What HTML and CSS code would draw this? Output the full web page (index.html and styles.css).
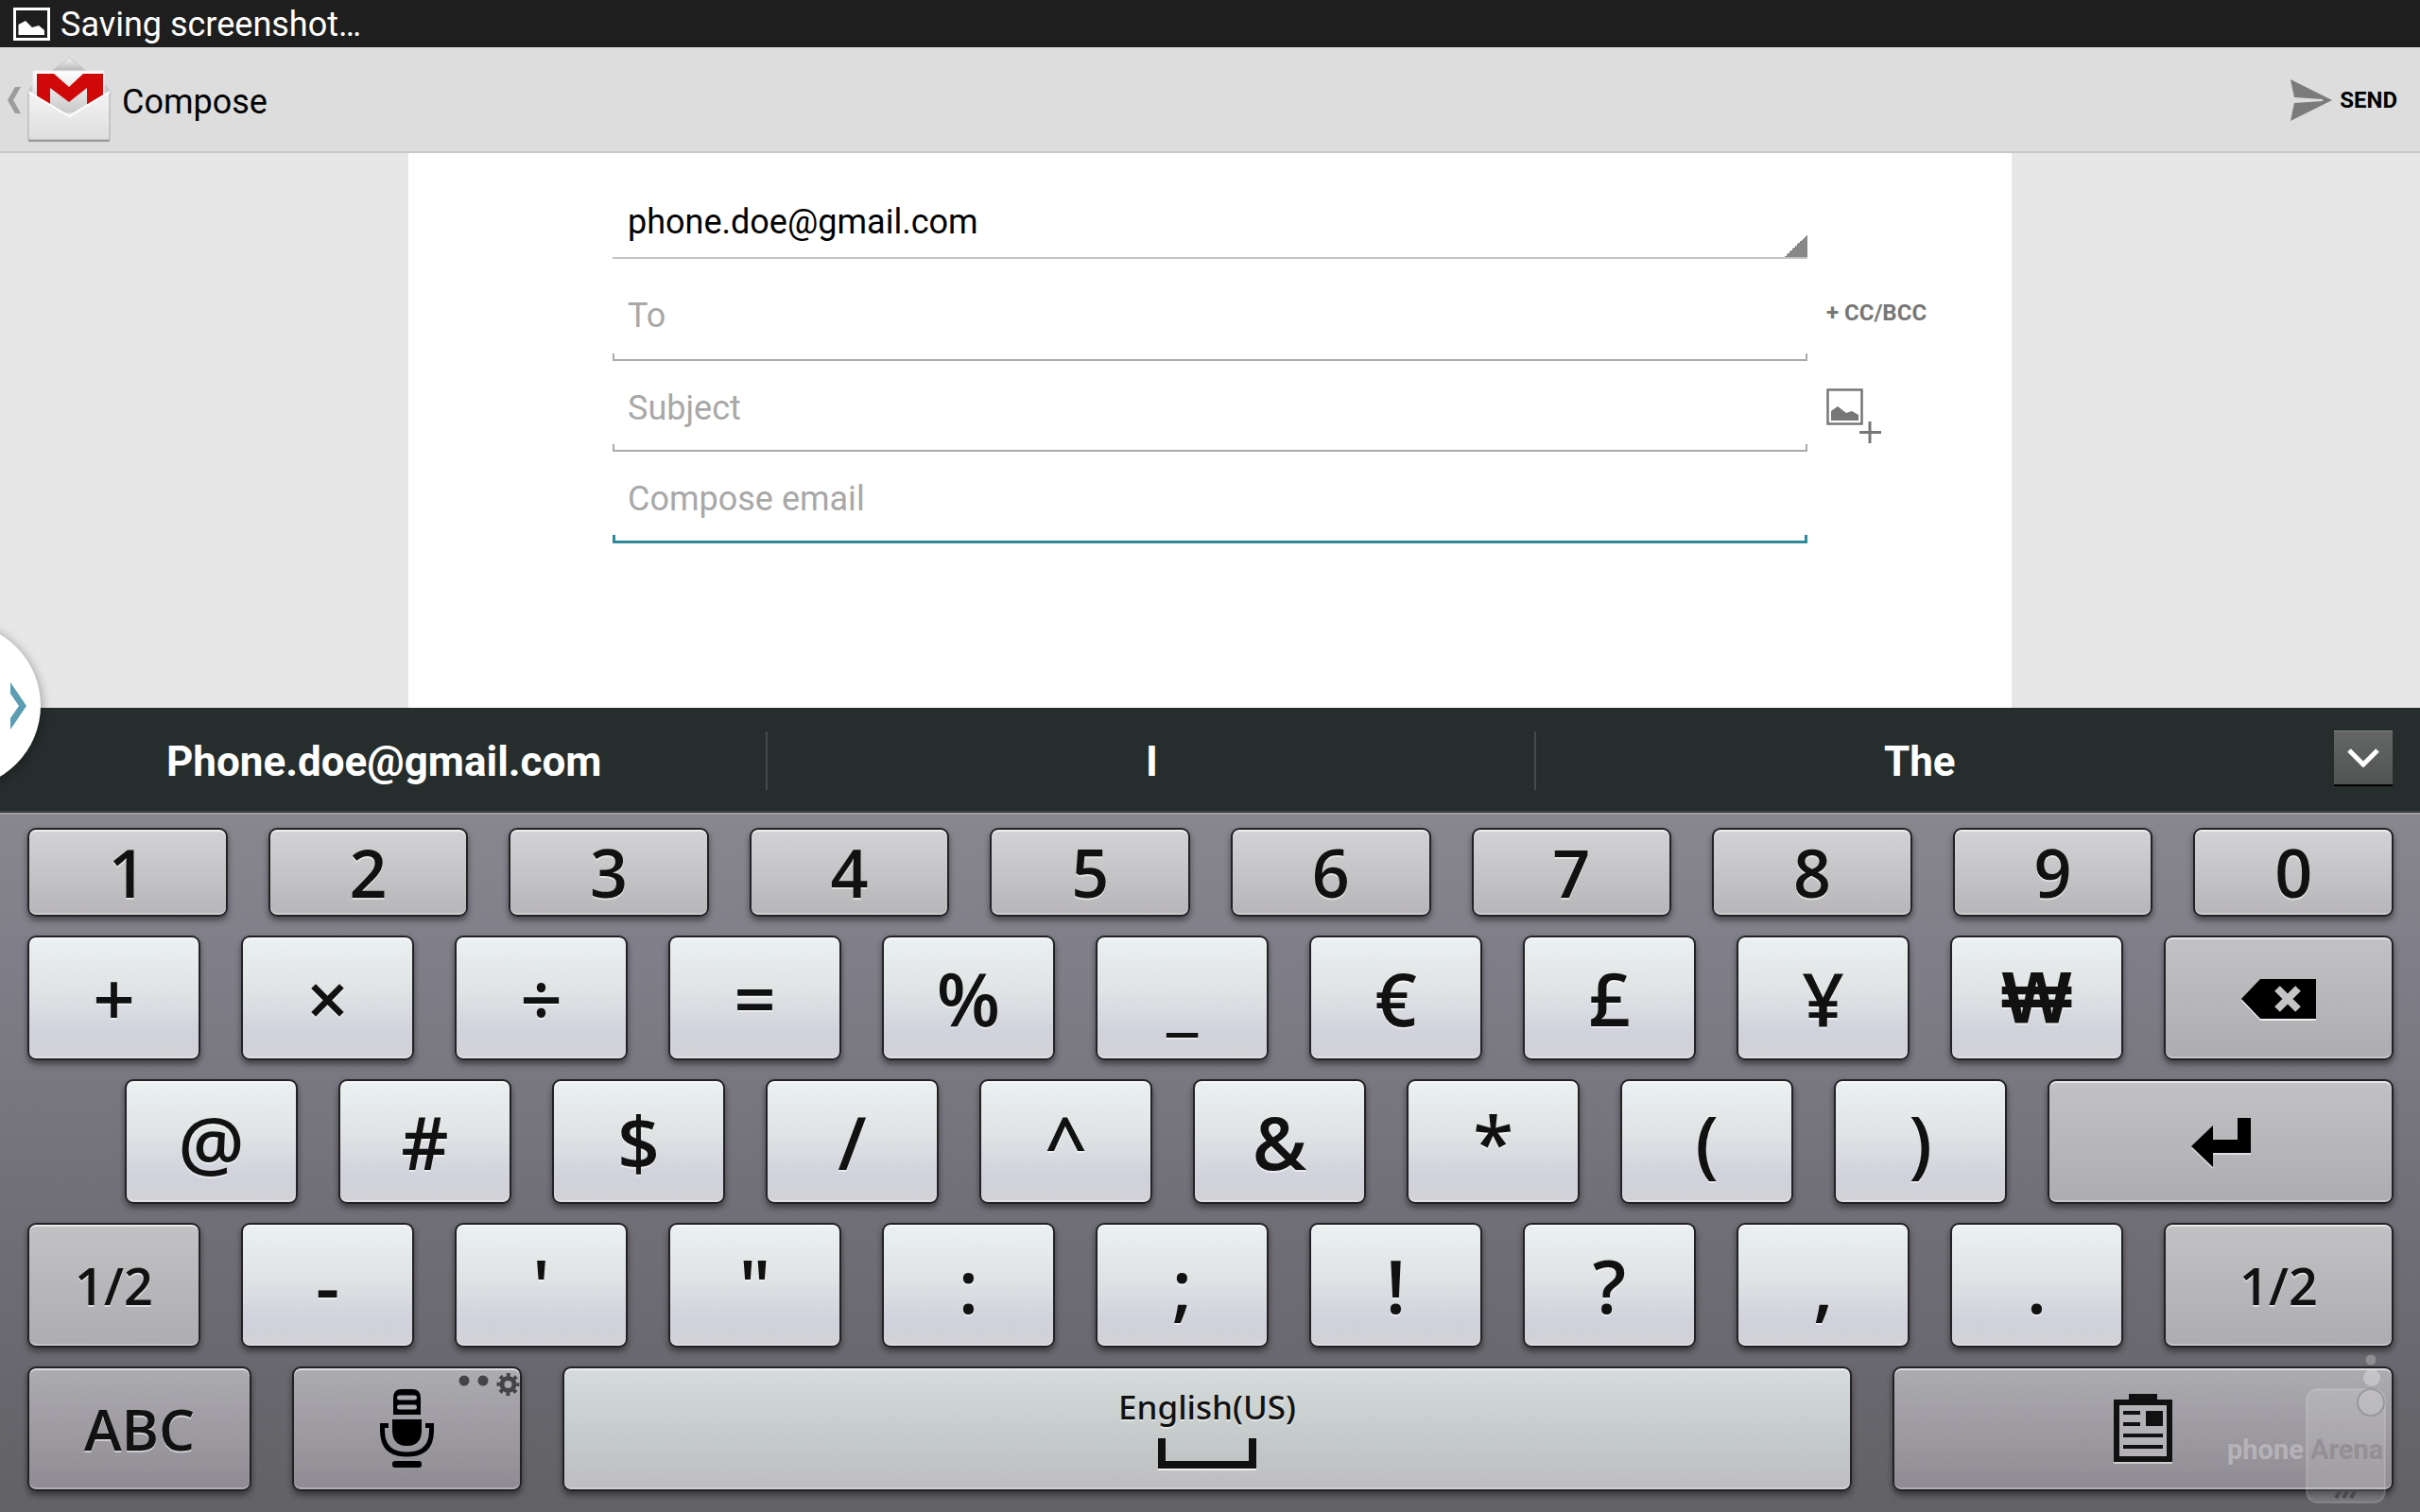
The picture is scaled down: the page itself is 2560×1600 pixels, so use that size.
FILE: index.html
```html
<!DOCTYPE html>
<html lang="en">
<head>
  <meta charset="UTF-8" />
  <meta name="viewport" content="width=device-width, initial-scale=1.0" />
  <title>Compose</title>
  <link rel="stylesheet" href="styles.css">
</head>
<body>
  <div class="status-bar">
    <svg width="39" height="35" viewBox="0 0 39 35">
      <rect x="1.5" y="1.5" width="36" height="32" fill="none" stroke="#fff" stroke-width="3"/>
      <path d="M5.5 29V18L13 14L20 21L27 19L33 24V29Z" fill="#fff"/>
    </svg>
    <span>Saving screenshot…</span>
  </div>

  <header class="action-bar">
    <a class="up" href="#" aria-label="Navigate up">
      <svg width="14" height="28" viewBox="0 0 14 28"><path d="M8 0H14L6 14L14 28H8L0 14Z" fill="#9c9c9c"/></svg>
      <svg width="90" height="92" viewBox="0 0 90 92">
        <defs>
          <linearGradient id="flap" x1="0" y1="0" x2="0" y2="1"><stop offset="0" stop-color="#f4f4f4"/><stop offset=".35" stop-color="#bbb"/><stop offset="1" stop-color="#ccc"/></linearGradient>
          <linearGradient id="card" x1="0" y1="0" x2="0" y2="1"><stop offset="0" stop-color="#fff"/><stop offset="1" stop-color="#c8c8c8"/></linearGradient>
          <linearGradient id="front" x1="0" y1="0" x2="0" y2="1"><stop offset="0" stop-color="#f4f4f4"/><stop offset="1" stop-color="#dedede"/></linearGradient>
        </defs>
        <path d="M45 1L86 33Q88 35 88 38H2Q2 35 4 33Z" fill="url(#flap)" stroke="#c6c6c6"/>
        <path d="M7 15H82V60H7Z" fill="url(#card)" stroke="#eee"/>
        <path d="M11 18H29L45 32L60 18H81V50H64V33L45 48L25 33V50H11Z" fill="#d00808"/>
        <path d="M2 37L45 63L88 37V88H2Z" fill="url(#front)" stroke="#aaa"/>
        <path d="M2 37L45 63L88 37" fill="none" stroke="#fff" stroke-width="2"/>
        <path d="M2 89H88" stroke="#999" stroke-width="2"/>
      </svg>
    </a>
    <h1>Compose</h1>
    <button class="send" type="button">
      <svg width="44" height="44" viewBox="0 0 44 44"><path d="M0 0L44 22L0 44L4 25L34 23V21L4 19Z" fill="#7b7b7b"/></svg>
      SEND
    </button>
  </header>

  <main class="compose">
    <form class="sheet">
      <select class="account" aria-label="From"><option>phone.doe@gmail.com</option></select>
      <input class="field field-to" type="text" placeholder="To" aria-label="To">
      <button class="side cc" type="button">+ CC/BCC</button>
      <input class="field" type="text" placeholder="Subject" aria-label="Subject">
      <button class="side" type="button" aria-label="Attach picture">
        <svg width="58" height="58" viewBox="0 0 58 58">
          <path d="M1.5 1.5H37.5V37.5H1.5Z" fill="none" stroke="#777" stroke-width="2.5"/>
          <path d="M5 34V24L12 19L21 26L27 24L34 28V34Z" fill="#777"/>
          <path d="M46 35V58M35 46.5H58" stroke="#777" stroke-width="3"/>
        </svg>
      </button>
      <input class="field active" type="text" placeholder="Compose email" aria-label="Compose email">
    </form>
  </main>

  <section class="keyboard">
    <button class="edge-tab" type="button" aria-label="Open tray">
      <svg width="17" height="50" viewBox="0 0 17 50"><path d="M0 0L17 25L0 50V38L9 25L0 12Z" fill="#5b9db3"/></svg>
    </button>
    <div class="suggestions">
      <button type="button">Phone.doe@gmail.com</button>
      <button type="button">I</button>
      <button type="button">The</button>
      <div class="more">
        <button class="expand" type="button" aria-label="More suggestions">
          <svg width="34" height="20" viewBox="0 0 34 20"><path d="M2 2L17 17L32 2" fill="none" stroke="#fff" stroke-width="5"/></svg>
        </button>
      </div>
    </div>

    <div class="keys">
      <div class="row digits">
        <button>1</button><button>2</button><button>3</button><button>4</button><button>5</button>
        <button>6</button><button>7</button><button>8</button><button>9</button><button>0</button>
      </div>
      <div class="row">
        <button>+</button><button>×</button><button>÷</button><button>=</button><button>%</button>
        <button>_</button><button>€</button><button>£</button><button>¥</button><button class="won">₩</button>
        <button class="fn backspace" aria-label="Backspace">
          <svg width="79" height="44" viewBox="0 0 79 44">
            <path d="M0 23L20 2H79V44H20Z" fill="#eee"/>
            <path d="M0 21L20 0H79V42H20Z"/>
            <path d="M38 10L60 32M60 10L38 32" stroke="#c4c4c6" stroke-width="8"/>
          </svg>
        </button>
      </div>
      <div class="row indent">
        <button>@</button><button>#</button><button>$</button><button>/</button><button>^</button>
        <button>&amp;</button><button>*</button><button>(</button><button>)</button>
        <button class="fn enter" aria-label="Enter">
          <svg width="63" height="54" viewBox="0 0 63 54">
            <path d="M0 32L23 10V25H49V2H63V39H23V54Z" fill="#ddd"/>
            <path d="M0 30L23 8V23H49V0H63V37H23V52Z"/>
          </svg>
        </button>
      </div>
      <div class="row">
        <button class="fn page">1/2</button><button>-</button><button>'</button><button>"</button><button>:</button>
        <button>;</button><button>!</button><button>?</button><button>,</button><button>.</button>
        <button class="fn page backspace">1/2</button>
      </div>
      <div class="row bottom">
        <button class="low abc">ABC</button>
        <button class="low mic" aria-label="Voice input">
          <svg width="58" height="84" viewBox="0 0 58 84">
            <path d="M14 27V9Q14 0 23 0H34Q43 0 43 9V27Z"/>
            <path d="M20.5 9H36.5M20.5 19H36.5" stroke="#aaa9ad" stroke-width="5" stroke-linecap="round"/>
            <path d="M13 32H44V43Q44 60 28.5 60Q13 60 13 43Z"/>
            <path d="M9 38.5H2.5V44Q2.5 69 28.5 69Q54.5 69 54.5 44V38.5H48" fill="none" stroke="#000" stroke-width="5"/>
            <rect x="13" y="76" width="31" height="7" rx="3"/>
          </svg>
          <svg class="options" width="65" height="26" viewBox="0 0 65 26">
            <g fill="#444447">
              <circle cx="6" cy="9" r="5.5"/>
              <circle cx="26" cy="9" r="5.5"/>
            </g>
            <circle cx="52.5" cy="13" r="6.5" fill="none" stroke="#444447" stroke-width="5"/>
            <circle cx="52.5" cy="13" r="10" fill="none" stroke="#444447" stroke-width="4" stroke-dasharray="3.9 3.95" stroke-dashoffset="1.95"/>
          </svg>
        </button>
        <button class="space">
          English(US)
          <svg width="104" height="34" viewBox="0 0 104 34">
            <path d="M0 33H104" stroke="#f4f4f4" stroke-width="2"/>
            <path d="M4 0V28H100V0" fill="none" stroke="#111" stroke-width="8"/>
          </svg>
        </button>
        <button class="low clipboard" aria-label="Clipboard">
          <svg width="62" height="74" viewBox="0 0 62 74">
            <path d="M0 73H62" stroke="#ccc" stroke-width="2"/>
            <path d="M16 0H46V6H62V72H0V6H16Z" fill="#111"/>
            <path d="M6 12H56V66H6Z" fill="#b4b2b6"/>
            <path d="M10 18H28V22H10ZM10 30H28V34H10ZM34 18H52V34H34ZM10 42H52V46H10ZM10 54H52V58H10Z" fill="#111"/>
          </svg>
        </button>
      </div>
    </div>

    <svg class="watermark" width="180" height="164" viewBox="0 0 180 164">
      <rect x="90" y="40" width="83" height="120" rx="12" fill="#fff" fill-opacity=".15" stroke="#fff" stroke-opacity=".15" stroke-width="2"/>
      <circle cx="158" cy="9" r="5.5" fill="#fff" fill-opacity=".25"/>
      <circle cx="159" cy="28" r="9" fill="#fff" fill-opacity=".3"/>
      <circle cx="158" cy="54" r="14" fill="#fff" fill-opacity=".15" stroke="#777" stroke-opacity=".5" stroke-width="2"/>
      <text x="6" y="114" fill="#b6b3b8">phone</text>
      <text x="94" y="114" fill="#938f95">Arena</text>
      <path d="M121 155L126 147M129 155L134 147M137 155L142 147" stroke="#4a494d" stroke-width="4"/>
    </svg>
  </section>
</body>
</html>
```

FILE: styles.css
```css
* {
  margin: 0;
  padding: 0;
  box-sizing: border-box;
}
body {
  background: #e7e7e7;
  color: #000;
  font-family: Roboto, sans-serif;
  font-size: 36px;
  display: flex;
  flex-direction: column;
  min-height: 100vh;
  overflow-x: hidden;
}
button, input, select {
  font: inherit;
  color: inherit;
  background: none;
  border: none;
  border-radius: 0;
  outline: none;
}
svg {
  display: block;
  flex: none;
}

/* top bars */
.status-bar {
  display: flex;
  align-items: center;
  gap: 11px;
  height: 50px;
  padding: 0 14px;
  background: #1e1e1e;
  color: #fff;
}
.status-bar span {
  padding-top: 2px;
}
.action-bar {
  display: flex;
  align-items: center;
  height: 112px;
  padding: 2px 24px 0 8px;
  background: #ddd;
  border-bottom: 2px solid #c8c8c8;
}
.up {
  display: flex;
  align-items: center;
  gap: 6px;
}
.action-bar h1 {
  margin-left: 11px;
  padding-top: 4px;
  font-size: 36px;
  font-weight: 400;
}
.send {
  display: flex;
  align-items: center;
  gap: 8px;
  margin-left: auto;
  font-size: 24px;
  font-weight: 700;
}

/* message form */
.compose {
  flex: 1;
  display: grid;
  grid-template-columns: 432fr 1696fr 432fr;
}
.sheet {
  grid-column: 2;
  display: grid;
  grid-template-columns: 216fr 1264fr 216fr;
  grid-template-rows: 112px 108px 96px 97px;
  background: #fff;
}
.account, .field {
  grid-column: 2;
  width: 100%;
  height: 100%;
  padding: 6px 16px 0;
}
.account {
  appearance: none;
  padding-top: 36px;
  border-bottom: 2px solid #c4c4c4;
  background: linear-gradient(135deg, transparent 50%, #888 50%) right bottom / 24px 24px no-repeat;
}
.field {
  border-bottom: 2px solid #aaa;
  background:
    linear-gradient(#aaa, #aaa) left bottom / 2px 6px no-repeat,
    linear-gradient(#aaa, #aaa) right bottom / 2px 6px no-repeat;
}
.field-to {
  padding-top: 14px;
}
.field.active {
  border-bottom: 3px solid #2f8a98;
  background:
    linear-gradient(#2f8a98, #2f8a98) left bottom / 3px 6px no-repeat,
    linear-gradient(#2f8a98, #2f8a98) right bottom / 3px 6px no-repeat;
}
.field::placeholder {
  color: #a8a8a8;
  opacity: 1;
}
.side {
  display: flex;
  align-items: center;
  padding-top: 20px;
  padding-left: 20px;
}
.cc {
  padding-top: 6px;
  color: #777;
  font-size: 24px;
  font-weight: 700;
}

/* keyboard */
.keyboard {
  position: relative;
}
.edge-tab {
  position: absolute;
  top: -90px;
  left: -132px;
  display: flex;
  align-items: center;
  justify-content: flex-end;
  width: 175px;
  height: 175px;
  padding-right: 15px;
  border-radius: 50%;
  background: #fff;
  box-shadow: 0 2px 12px rgba(0, 0, 0, 0.4);
}
.suggestions {
  display: flex;
  height: 111px;
  background: #262d2d;
  border-bottom: 2px solid #3c3e42;
}
.suggestions > button {
  flex: 812 1 812px;
  padding-top: 4px;
  color: #fff;
  font-size: 44px;
  font-weight: 700;
  background: linear-gradient(#454b4b, #454b4b) right 25px / 2px 62px no-repeat;
}
.suggestions > button:nth-child(3) {
  background: none;
}
.more {
  flex: 123 1 123px;
  display: flex;
  justify-content: flex-end;
  padding: 24px 29px 0 0;
}
.expand {
  display: flex;
  align-items: center;
  justify-content: center;
  width: 62px;
  height: 57px;
  background: linear-gradient(#646665, #525453);
  border-top: 1px solid #858786;
  box-shadow: 0 2px #000;
}
.keys {
  display: flex;
  flex-direction: column;
  gap: 20px;
  padding: 16px 28px 22px 29px;
  background: linear-gradient(#88878e, #807e88 20%, #727077 55%, #626166);
  box-shadow: inset 0 2px #9da0a4;
}
.row {
  display: flex;
  gap: 43px;
  height: 132px;
}
.digits {
  height: 94px;
}
.indent {
  padding-left: 103px;
}
.row button {
  flex: 183 1 183px;
  display: flex;
  align-items: center;
  justify-content: center;
  border: 2px solid #222226;
  border-radius: 9px;
  background: linear-gradient(#ebf0f0, #dfe3e4 45%, #d0d1db 80%, #d2d2d6);
  box-shadow: inset 0 2px rgba(255, 255, 255, 0.6), inset 0 -2px rgba(255, 255, 255, 0.3), 0 4px 6px rgba(0, 0, 0, 0.45);
  color: #111;
  font-family: "Open Sans", "Noto Sans", sans-serif;
  font-size: 78px;
  font-weight: 600;
  line-height: 1;
  text-shadow: 0 2px rgba(255, 255, 255, 0.5);
}
.digits button {
  background: linear-gradient(#d3d3d5, #b7b5b7);
  font-size: 70px;
}
.row .won {
  font-family: "Liberation Sans", sans-serif;
}
.row .fn {
  background: linear-gradient(#c2c2c4, #adacb1);
}
.row .low {
  background: linear-gradient(#adacb1, #8f8b92);
}
.row .page {
  font-size: 54px;
}
.row .backspace {
  flex: 243 1 243px;
}
.row .enter {
  flex: 366 1 366px;
}
.row .abc {
  flex: 237 1 237px;
  font-size: 60px;
}
.row .mic {
  position: relative;
  flex: 243 1 243px;
}
.options {
  position: absolute;
  top: 4px;
  right: 0;
}
.row .space {
  flex: 1364 1 1364px;
  flex-direction: column;
  gap: 16px;
  padding-top: 2px;
  background: linear-gradient(#d6dbdb, #c4c9c9 60%, #bebdc0);
  font-family: "Noto Sans", sans-serif;
  font-size: 35px;
  font-weight: 500;
}
.row .clipboard {
  flex: 530 1 530px;
}
.fn svg {
  margin-top: 4px;
}
.watermark {
  position: absolute;
  right: 30px;
  bottom: 6px;
  pointer-events: none;
  font: 700 29px Roboto, sans-serif;
}
```
